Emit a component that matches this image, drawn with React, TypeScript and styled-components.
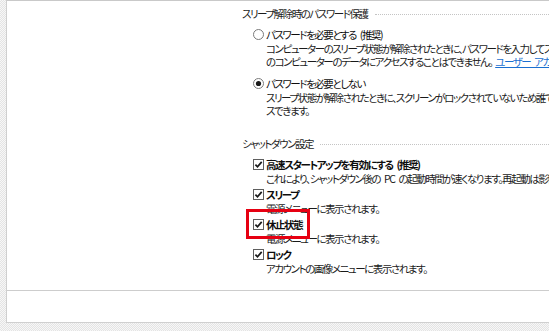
import React from "react";
import styled, { createGlobalStyle } from "styled-components";

const Global = createGlobalStyle`
  html, body { margin: 0; padding: 0; background: #fff; }
  body { width: 549px; height: 331px; overflow: hidden; }
`;

const Frame = styled.div`
  width: 549px;
  height: 331px;
  box-sizing: border-box;
  padding: 0 0 8px 6px;
  background-color: #f4f4f4;
  background-image: repeating-conic-gradient(#e4e4e4 0 25%, #f7f7f7 0 50%);
  background-size: 2px 2px;
  display: flex;
  flex-direction: column;
  overflow: hidden;
`;

const Panel = styled.div`
  flex: 1;
  background: #fff;
  border-left: 1px solid #cfcfcf;
  border-top: 1px solid #c9c9c9;
  border-bottom: 1px solid #cfcfcf;
  display: flex;
  flex-direction: column;
  overflow: hidden;
`;

const Scroll = styled.div`
  height: 289px;
  box-sizing: border-box;
  padding: 6px 0 0 235px;
  overflow: hidden;
  font-family: "Noto Sans CJK JP", "Noto Sans", sans-serif;
  font-size: 10.5px;
  font-feature-settings: "palt";
  letter-spacing: -1.45px;
  word-spacing: 3px;
  color: #111;
`;

const Footer = styled.div`
  flex: 1;
  border-top: 1px solid #cdcdcd;
`;

const Section = styled.section<{ $gap?: number }>`
  margin-bottom: ${(p) => p.$gap ?? 0}px;
`;

const Heading = styled.div`
  display: flex;
  align-items: center;
  height: 14px;
  line-height: 14px;
  white-space: nowrap;
  margin-bottom: 6px;
  color: #1c1c1c;
  &::after {
    content: "";
    flex: 1;
    margin-left: 7px;
    border-top: 1px dotted #c4c4c4;
  }
`;

const Options = styled.div<{ $gap: number }>`
  padding-left: 11px;
  display: flex;
  flex-direction: column;
  gap: ${(p) => p.$gap}px;
`;

const Option = styled.div``;

const LabelRow = styled.div<{ $bold?: boolean }>`
  display: flex;
  align-items: center;
  height: 15px;
  line-height: 15px;
  white-space: nowrap;
  font-weight: ${(p) => (p.$bold ? 700 : 400)};
  color: #0d0d0d;
`;

const Control = styled.svg`
  flex: none;
  width: 11px;
  height: 11px;
  margin-right: 2px;
`;

const Desc = styled.div`
  padding-left: 13px;
  line-height: 13px;
  white-space: nowrap;
  color: #1a1a1a;
`;

const Link = styled.a`
  color: #1a6fd0;
  text-decoration: underline;
  margin-left: 3px;
`;

const Highlight = styled.span`
  position: relative;
  &::before {
    content: "";
    position: absolute;
    left: -20px;
    right: -8px;
    top: -8px;
    bottom: -7px;
    border: 3px solid #e60012;
    pointer-events: none;
  }
`;

const Radio = ({ checked }: { checked?: boolean }) => (
  <Control viewBox="0 0 11 11">
    <circle cx="5.5" cy="5.5" r="5" fill="#fff" stroke="#7a7a7a" strokeWidth="1" />
    {checked && <circle cx="5.5" cy="5.5" r="2.6" fill="#1a1a1a" />}
  </Control>
);

const Check = () => (
  <Control viewBox="0 0 11 11">
    <rect x="0.5" y="0.5" width="10" height="10" fill="#fff" stroke="#5e5e5e" strokeWidth="1" />
    <path d="M2.4 5.6 L4.5 7.8 L8.7 2.9" fill="none" stroke="#1a1a1a" strokeWidth="1.7" />
  </Control>
);

type Item = { label: string; desc: string; highlight?: boolean };

const shutdownItems: Item[] = [
  {
    label: "高速スタートアップを有効にする (推奨)",
    desc: "これにより、シャットダウン後の PC の起動時間が速くなります。再起動は影響を受けません。",
  },
  { label: "スリープ", desc: "電源メニューに表示されます。" },
  { label: "休止状態", desc: "電源メニューに表示されます。", highlight: true },
  { label: "ロック", desc: "アカウントの画像メニューに表示されます。" },
];

export default function App() {
  return (
    <>
      <Global />
      <Frame>
        <Panel>
          <Scroll>
            <Section $gap={20}>
              <Heading>スリープ解除時のパスワード保護</Heading>
              <Options $gap={8}>
                <Option>
                  <LabelRow>
                    <Radio />
                    パスワードを必要とする (推奨)
                  </LabelRow>
                  <Desc>
                    コンピューターのスリープ状態が解除されたときに、パスワードを入力してスクリーンのロックを解除する必要があります。
                  </Desc>
                  <Desc>
                    のコンピューターのデータにアクセスすることはできません。
                    <Link>ユーザー アカウント パスワードの作成または変更</Link>
                  </Desc>
                </Option>
                <Option>
                  <LabelRow>
                    <Radio checked />
                    パスワードを必要としない
                  </LabelRow>
                  <Desc>
                    スリープ状態が解除されたときに、スクリーンがロックされていないため誰でもお使いの PC にアクセ
                  </Desc>
                  <Desc>スできます。</Desc>
                </Option>
              </Options>
            </Section>
            <Section>
              <Heading>シャットダウン設定</Heading>
              <Options $gap={2}>
                {shutdownItems.map((it) => (
                  <Option key={it.label}>
                    <LabelRow $bold>
                      <Check />
                      {it.highlight ? <Highlight>{it.label}</Highlight> : it.label}
                    </LabelRow>
                    <Desc>{it.desc}</Desc>
                  </Option>
                ))}
              </Options>
            </Section>
          </Scroll>
          <Footer />
        </Panel>
      </Frame>
    </>
  );
}
